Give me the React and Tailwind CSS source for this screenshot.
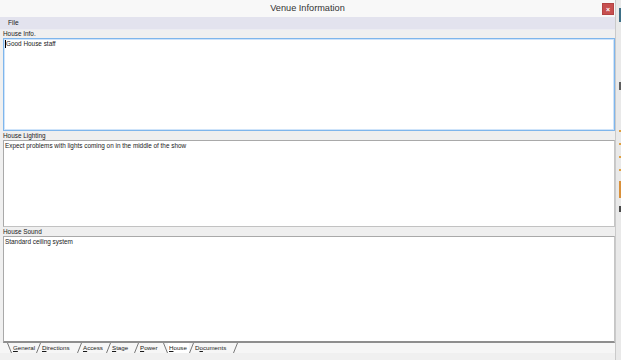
import React from 'react'

const tabs = [
  { key: 'general', pre: '', ul: 'G', post: 'eneral', w: 'w-[24px]' },
  { key: 'directions', pre: '', ul: 'D', post: 'irections', w: 'w-[36px]' },
  { key: 'access', pre: '', ul: 'A', post: 'ccess', w: 'w-[24px]' },
  { key: 'stage', pre: '', ul: 'S', post: 'tage', w: 'w-[23px]' },
  { key: 'power', pre: '', ul: 'P', post: 'ower', w: 'w-[24px]' },
  { key: 'house', pre: '', ul: 'H', post: 'ouse', w: 'w-[21px]', active: true },
  { key: 'documents', pre: 'D', ul: 'o', post: 'cuments', w: 'w-[39px]' }
]

function Slant({ back }) {
  return (
    <svg width="5" height="10" viewBox="0 0 5 10" className="shrink-0">
      {back ? (
        <line x1="0.5" y1="0" x2="4.5" y2="10" stroke="#6b6b6b" strokeWidth="0.9" />
      ) : (
        <line x1="0.5" y1="10" x2="4.5" y2="0" stroke="#6b6b6b" strokeWidth="0.9" />
      )}
    </svg>
  )
}

function Label({ children }) {
  return (
    <div className="h-[9px] pl-[3px] text-[6.4px] leading-[9px] text-[#1a1a1a] bg-[#efefef]">
      {children}
    </div>
  )
}

export default function App() {
  return (
    <div
      className="w-[621px] h-[360px] flex bg-[#f0f0f0] overflow-hidden"
      style={{ fontFamily: '"Liberation Sans", Arial, sans-serif' }}
    >
      <div className="w-[616px] flex flex-col border-r border-[#cacaca]">
        {/* Title bar */}
        <div className="h-[17px] relative flex items-center justify-center bg-[#f8f8f8]">
          <span className="text-[9.2px] text-[#333333]">Venue Information</span>
          <div className="absolute right-[1px] top-[3px] w-[12px] h-[12px] bg-[#c74f4f] border border-[#b34343] flex items-center justify-center">
            <span className="text-[7px] leading-none font-bold text-white">×</span>
          </div>
        </div>

        {/* Menu */}
        <div className="h-[13px] bg-[#e3e3ee] flex items-center pl-[8px] border-b border-[#ececf2]">
          <span className="text-[6.6px] text-[#1a1a1a]">File</span>
        </div>

        <div className="h-[8px] pl-[3px] text-[6.4px] leading-[8px] text-[#1a1a1a]">House Info.</div>

        <div className="ml-[3px] w-[612px] h-[93px] bg-white border border-[#7fb6ec] shadow-[inset_0_0_0_1px_#cfe4fa]">
          <div className="pl-[1px] pt-[1px] flex items-start text-[6.4px] leading-[8px] text-[#1a1a1a]">
            <span className="w-px h-[8px] bg-black" />
            <span>Good House staff</span>
          </div>
        </div>

        <Label>House Lighting</Label>

        <div className="ml-[3px] w-[612px] h-[87px] bg-white border border-[#a9a9a9] border-r-[#c6c6c6] border-b-[#c2c2c2]">
          <div className="pl-[1px] pt-[1px] text-[6.4px] leading-[8px] text-[#1a1a1a]">
            Expect problems with lights coming on in the middle of the show
          </div>
        </div>

        <Label>House Sound</Label>

        <div className="ml-[3px] w-[612px] h-[107px] bg-white border border-[#a9a9a9] border-r-[#c6c6c6] border-b-2 border-b-[#8e8e8e]">
          <div className="pl-[1px] pt-[1px] text-[6.4px] leading-[8px] text-[#1a1a1a]">
            Standard ceiling system
          </div>
        </div>

        {/* Sheet tabs */}
        <div className="h-[10px] flex items-stretch pl-[7px] bg-[#f6f6f6] text-[6.2px] leading-[10px] text-[#1a1a1a]">
          <Slant back />
          {tabs.map((t, i) => {
            const next = tabs[i + 1]
            return (
              <React.Fragment key={t.key}>
                <span className={`${t.w} pl-[1px] whitespace-nowrap ${t.active ? 'bg-white' : ''}`}>
                  {t.pre}
                  <u className="underline-offset-[1px]">{t.ul}</u>
                  {t.post}
                </span>
                <Slant back={next && next.active} />
              </React.Fragment>
            )
          })}
        </div>

        <div className="flex-1 bg-[#f0f0f0]" />
      </div>

      {/* desktop strip */}
      <div className="flex-1 flex bg-[#e9e9e9]">
        <div className="flex-1" />
        <div className="w-[2px] flex flex-col">
          <div className="h-[8px]" />
          <div className="h-[14px] bg-[#3d6f86]" />
          <div className="h-[60px]" />
          <div className="h-[8px] bg-[#5e5e5e]" />
          <div className="h-[40px]" />
          <div className="h-[2px] bg-[#e0a040]" />
          <div className="h-[11px]" />
          <div className="h-[2px] bg-[#e0a040]" />
          <div className="h-[11px]" />
          <div className="h-[2px] bg-[#e0a040]" />
          <div className="h-[11px]" />
          <div className="h-[2px] bg-[#e0a040]" />
          <div className="h-[10px]" />
          <div className="h-[17px] bg-[#d9903a]" />
          <div className="h-[8px]" />
          <div className="h-[6px] bg-[#4a4a4a]" />
        </div>
      </div>
    </div>
  )
}
